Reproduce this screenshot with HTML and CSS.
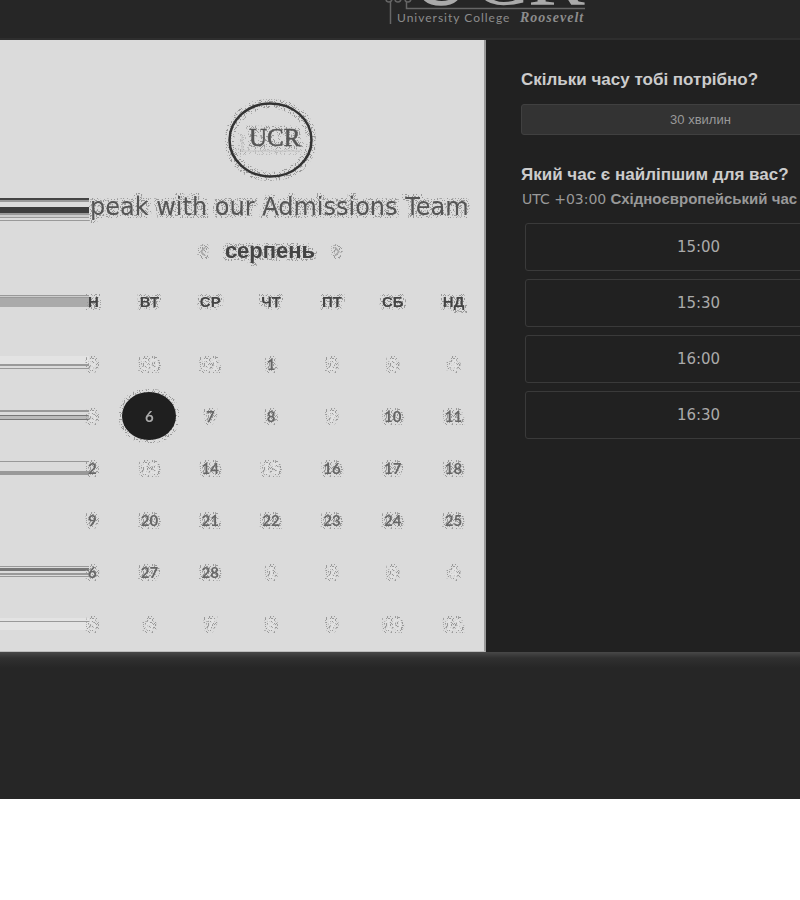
FILE: index.html
```html
<!DOCTYPE html>
<html lang="uk">
<head>
<meta charset="utf-8">
<meta name="viewport" content="width=device-width, initial-scale=1">
<title>University College Roosevelt</title>
<link rel="stylesheet" href="styles.css">
</head>
<body>
<svg class="defs" width="0" height="0" aria-hidden="true">
  <filter id="speckle" x="-30%" y="-40%" width="160%" height="180%" color-interpolation-filters="sRGB">
    <feMorphology in="SourceAlpha" operator="dilate" radius="3" result="halo"/>
    <feTurbulence type="fractalNoise" baseFrequency="0.8" numOctaves="2" seed="4"/>
    <feColorMatrix values="0 0 0 0 0.6  0 0 0 0 0.6  0 0 0 0 0.6  30 0 0 0 -17"/>
    <feComposite in2="halo" operator="in" result="dots"/>
    <feMerge><feMergeNode in="dots"/><feMergeNode in="SourceGraphic"/></feMerge>
  </filter>
</svg>
<div class="page">
  <header class="top">
    <svg class="brand" width="216" height="38" viewBox="0 0 216 38" role="img" aria-label="UCR University College Roosevelt">
      <g fill="none" stroke="#666" stroke-width="1.5">
        <path d="M5.500 2V24M21.500 2V8.500H200"/>
        <circle cx="4" cy="-1" r="3"/><circle cx="13" cy="-1" r="3"/><circle cx="23" cy="-1" r="3"/>
      </g>
      <text class="brand-big" x="25" y="5">UCR</text>
      <text class="brand-line" x="12" y="22">University College</text>
      <text class="brand-name" x="135" y="22">Roosevelt</text>
    </svg>
  </header>
  <main class="scheduler">
    <section class="calendar">
      <div class="seal">
        <svg width="104" height="92" viewBox="0 0 104 92" role="img" aria-label="UCR">
          <g class="speckled">
            <ellipse cx="52.500" cy="46" rx="41" ry="36.500" fill="none" stroke="#333" stroke-width="2.500"/>
            <path d="M24 57H82M24 42V57" stroke="#c4c4c4" stroke-width="1" fill="none"/>
            <text class="seal-text" x="31" y="52">UCR</text>
          </g>
        </svg>
      </div>
      <div class="title-row">
        <span class="smear smear-title"></span>
        <h1 class="speckled">peak with our Admissions Team</h1>
      </div>
      <div class="month">
        <button class="arrow speckled" type="button" aria-label="Попередній місяць">‹</button>
        <h2 class="speckled">серпень</h2>
        <button class="arrow speckled" type="button" aria-label="Наступний місяць">›</button>
      </div>
      <table class="days">
        <colgroup><col class="col-smear"><col class="col-first"><col><col><col><col><col><col></colgroup>
        <thead>
          <tr><td><span class="smear smear-head"></span></td><th>Н</th><th>ВТ</th><th>СР</th><th>ЧТ</th><th>ПТ</th><th>СБ</th><th>НД</th></tr>
        </thead>
        <tbody>
          <tr><td><span class="smear smear-a"></span></td><td><button class="off">9</button></td><td><button class="off">30</button></td><td><button class="off">31</button></td><td><button>1</button></td><td><button class="off">2</button></td><td><button class="off">3</button></td><td><button class="off">4</button></td></tr>
          <tr><td><span class="smear smear-b"></span></td><td><button class="off">5</button></td><td><button class="selected">6</button></td><td><button>7</button></td><td><button>8</button></td><td><button class="off">9</button></td><td><button>10</button></td><td><button>11</button></td></tr>
          <tr><td><span class="smear smear-c"></span></td><td><button>2</button></td><td><button class="off">13</button></td><td><button>14</button></td><td><button class="off">15</button></td><td><button>16</button></td><td><button>17</button></td><td><button>18</button></td></tr>
          <tr><td></td><td><button>9</button></td><td><button>20</button></td><td><button>21</button></td><td><button>22</button></td><td><button>23</button></td><td><button>24</button></td><td><button>25</button></td></tr>
          <tr><td><span class="smear smear-d"></span></td><td><button>6</button></td><td><button>27</button></td><td><button>28</button></td><td><button class="off">1</button></td><td><button class="off">2</button></td><td><button class="off">3</button></td><td><button class="off">4</button></td></tr>
          <tr><td><span class="smear smear-e"></span></td><td><button class="off">5</button></td><td><button class="off">6</button></td><td><button class="off">7</button></td><td><button class="off">8</button></td><td><button class="off">9</button></td><td><button class="off">10</button></td><td><button class="off">11</button></td></tr>
        </tbody>
      </table>
    </section>
    <section class="options">
      <h3>Скільки часу тобі потрібно?</h3>
      <button class="duration" type="button">30 хвилин</button>
      <h3>Який час є найліпшим для вас?</h3>
      <p class="zone"><span>UTC +03:00</span> Східноєвропейський час</p>
      <div class="slots">
        <button type="button">15:00</button>
        <button type="button">15:30</button>
        <button type="button">16:00</button>
        <button type="button">16:30</button>
      </div>
    </section>
  </main>
  <footer class="bottom"></footer>
</div>
</body>
</html>
```
FILE: styles.css
```css
* { box-sizing: border-box; }
body { margin: 0; background: #fff; font-family: "Liberation Sans", sans-serif; }
button { font: inherit; color: inherit; background: none; border: 0; padding: 0; }
h1, h2, h3, p { margin: 0; }
.defs { display: block; }
.page { overflow: hidden; background: #262626; }
.speckled { filter: url(#speckle); }

.top { display: flex; padding-left: 385px; border-bottom: 2px solid #2e2e2e; }
.brand { display: block; flex: none; }
.brand-big { font: 85px "Liberation Serif", serif; fill: #aaa; }
.brand-line { font: 12px Lato, sans-serif; letter-spacing: 1px; fill: #8c8c8c; }
.brand-name { font: italic bold 14px "Liberation Serif", serif; letter-spacing: 1px; fill: #8c8c8c; }

.scheduler { display: grid; grid-template-columns: 486fr 394fr; width: 110%; }
.calendar { background: #dbdbdb; border-right: 2px solid #999; border-bottom: 1px solid #bbb; color: #444; padding: 54px 0 1px; }
.seal { display: flex; justify-content: center; padding-left: 56px; }
.seal svg { display: block; }
.seal-text { font: 25px "Liberation Serif", serif; fill: #555; stroke: #555; stroke-width: 0.5; }
.title-row { display: flex; align-items: center; gap: 1px; height: 44px; margin-top: 2px; }
.title-row h1 { font: 24px/28px "DejaVu Sans", sans-serif; color: #555; padding-bottom: 6px; white-space: nowrap; }
.month { display: flex; justify-content: center; align-items: center; gap: 18px; height: 38px; padding-left: 56px; }
.month h2 { font-size: 22px; line-height: 28px; }
.arrow { font-size: 22px; line-height: 24px; color: #aaa; }

.days { width: 100%; table-layout: fixed; border-collapse: collapse; }
.days td, .days th { padding: 0; height: 52px; text-align: center; vertical-align: middle; }
.days thead th, .days thead td { height: 68px; padding-bottom: 6px; }
.days th { font-size: 15px; filter: url(#speckle); }
.col-smear { width: 88px; }
.col-first { width: 31px; }
.days th:nth-child(2), .days td:nth-child(2) { text-align: left; }
.days button { font: bold 15px Lato, sans-serif; color: #666; filter: url(#speckle); }
.days .off { color: #e2e2e2; }
.days .selected { width: 54px; height: 48px; border-radius: 50%; background: #1f1f1f; color: #aaa; }

.smear { display: block; flex: none; width: 89px; height: 16px; }
.smear-title { height: 24px; background: linear-gradient(#444 0 2px, #999 2px 4px, #dbdbdb 4px 9px, #3d3d3d 9px 15px, #999 15px 17px, #ccc 17px 19px, #999 19px 20px, #dbdbdb 20px 22px, #999 22px 23px, #dbdbdb 23px); }
.smear-head { height: 12px; background: linear-gradient(#999 0 1px, #ccc 1px 2px, #999 2px 3px, #aaa 3px); }
.smear-a { background: linear-gradient(#e3e3e3 0 8px, #999 8px 10px, #dbdbdb 10px 12px, #999 12px 13px, #dbdbdb 13px); }
.smear-b { height: 12px; background: linear-gradient(#999 0 2px, #dbdbdb 2px 5px, #777 5px 6px, #bbb 6px 9px, #777 9px 10px, #dbdbdb 10px); }
.smear-c { height: 14px; background: linear-gradient(#999 0 1px, #dbdbdb 1px 10px, #999 10px); }
.smear-d { height: 12px; background: linear-gradient(#999 0 1px, #dbdbdb 1px 2px, #777 2px 5px, #dbdbdb 5px 7px, #999 7px 9px, #dbdbdb 9px 10px, #999 10px 11px, #dbdbdb 11px); }
.smear-e { height: 12px; background: linear-gradient(#e3e3e3 0 3px, #999 3px 4px, #e3e3e3 4px); }

.options { background: #212121; color: #ccc; padding: 30px 0 0 35px; }
.options h3 { font-size: 17px; line-height: 20px; white-space: nowrap; }
.duration { display: block; width: 100%; height: 31px; margin: 14px 0 30px; border: 1px solid #404040; border-radius: 3px; background: #333; color: #999; font-size: 13px; }
.zone { margin: 4px 0 14px; padding-left: 1px; font-size: 15px; font-weight: bold; line-height: 20px; color: #999; white-space: nowrap; }
.zone span { font: 14px/20px "DejaVu Sans", sans-serif; }
.slots { display: grid; gap: 8px; padding: 0 8px 0 4px; }
.slots button { height: 48px; border: 1px solid #3a3a3a; border-radius: 3px; font: 15px "DejaVu Sans", sans-serif; color: #aaa; }
.bottom { height: 147px; background: linear-gradient(#484848, #303030 6px, #262626 16px); }
```
